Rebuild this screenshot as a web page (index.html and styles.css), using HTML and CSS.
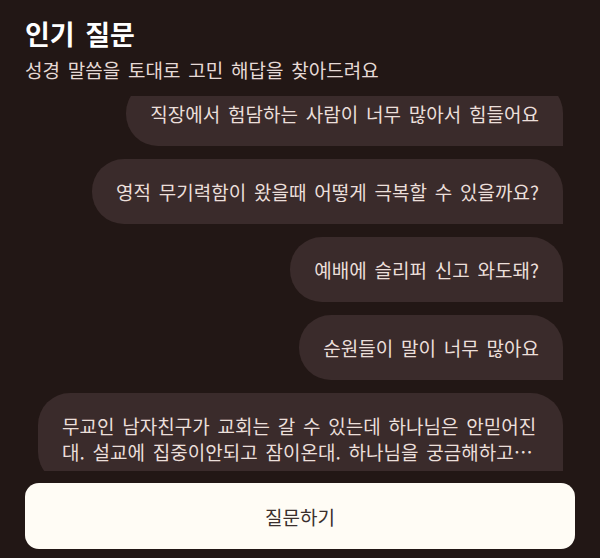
FILE: index.html
```html
<!DOCTYPE html>
<html lang="ko">
<head>
<meta charset="utf-8">
<title>인기 질문</title>
<link rel="stylesheet" href="styles.css">
</head>
<body>
<main class="page">
  <header class="intro">
    <h1 class="intro-title">인기 질문</h1>
    <p class="intro-sub">성경 말씀을 토대로 고민 해답을 찾아드려요</p>
  </header>

  <section class="questions">
    <ul class="question-list">
      <li class="bubble"><span class="bubble-text">직장에서 험담하는 사람이 너무 많아서 힘들어요</span></li>
      <li class="bubble"><span class="bubble-text">영적 무기력함이 왔을때 어떻게 극복할 수 있을까요?</span></li>
      <li class="bubble"><span class="bubble-text">예배에 슬리퍼 신고 와도돼?</span></li>
      <li class="bubble"><span class="bubble-text">순원들이 말이 너무 많아요</span></li>
      <li class="bubble"><span class="bubble-text">무교인 남자친구가 교회는 갈 수 있는데 하나님은 안믿어진대. 설교에 집중이안되고 잠이온대. 하나님을 궁금해하고 싶은데 어떻게 해야 할까?</span></li>
    </ul>
  </section>

  <button class="ask-button" type="button">질문하기</button>
</main>
</body>
</html>
```

FILE: styles.css
```css
* {
  box-sizing: border-box;
}

html,
body {
  margin: 0;
  height: 100%;
  background: #221715;
}

body {
  font-family: "Noto Sans CJK KR", "Noto Sans", sans-serif;
  color: #ebdfda;
}

.page {
  display: flex;
  flex-direction: column;
  height: 558px;
  padding: 0 25px;
}

.intro {
  padding-top: 16px;
}

.intro-title {
  margin: 0;
  font-size: 27px;
  line-height: 36px;
  font-weight: 700;
  word-spacing: 3px;
  color: #ffffff;
}

.intro-sub {
  margin: 4px 0 0;
  font-size: 19px;
  line-height: 28px;
  font-weight: 400;
  word-spacing: 2.5px;
  color: #e6dad6;
}

/* scrolling list of popular questions, shown mid-scroll */
.questions {
  flex: none;
  height: 375px;
  margin: 12px 12px 0 13px;
  overflow: hidden;
}

.question-list {
  list-style: none;
  margin: -15px 0 0;
  padding: 0;
  display: flex;
  flex-direction: column;
  align-items: flex-end;
  gap: 13px;
}

.bubble {
  flex: none;
  max-width: 100%;
  padding: 19.5px 24px;
  background: #3a2b2b;
  border-radius: 32px 32px 0 32px;
}

.bubble-text {
  display: -webkit-box;
  -webkit-box-orient: vertical;
  -webkit-line-clamp: 2;
  overflow: hidden;
  font-size: 19px;
  line-height: 26px;
  word-spacing: 2.5px;
  color: #ebdfda;
}

.ask-button {
  flex: none;
  margin-top: 12px;
  height: 66px;
  width: 100%;
  border: 0;
  border-radius: 14px;
  background: #fffcf5;
  font-family: inherit;
  font-size: 19px;
  color: #3a2f2d;
}
```
